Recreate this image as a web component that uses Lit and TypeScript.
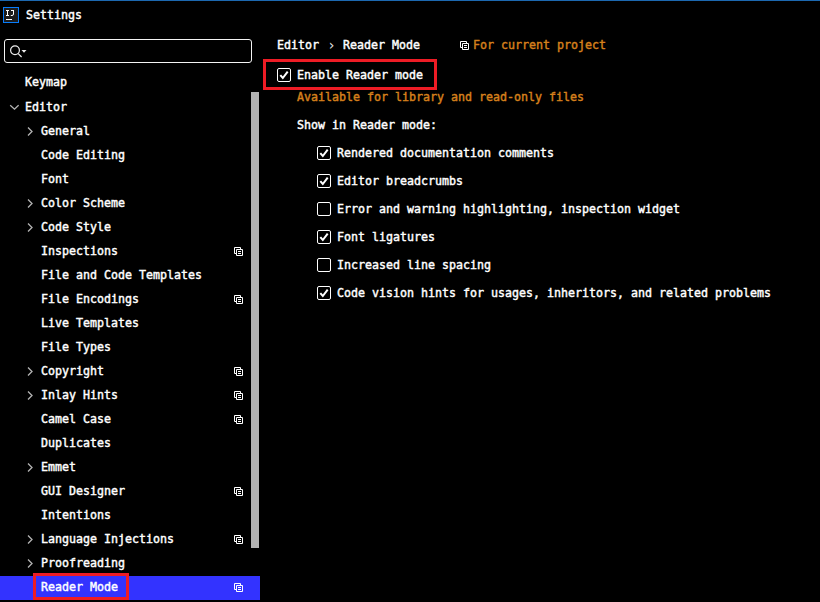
import { LitElement, html, css, svg, nothing } from "lit";
import { customElement } from "lit/decorators.js";
import { classMap } from "lit/directives/class-map.js";

interface Item { label: string; arrow?: "open" | "closed"; top?: boolean; first?: boolean; project?: boolean; selected?: boolean; }

const items: Item[] = [
  { label: "Keymap", top: true, first: true },
  { label: "Editor", top: true, arrow: "open" },
  { label: "General", arrow: "closed" },
  { label: "Code Editing" },
  { label: "Font" },
  { label: "Color Scheme", arrow: "closed" },
  { label: "Code Style", arrow: "closed" },
  { label: "Inspections", project: true },
  { label: "File and Code Templates" },
  { label: "File Encodings", project: true },
  { label: "Live Templates" },
  { label: "File Types" },
  { label: "Copyright", arrow: "closed", project: true },
  { label: "Inlay Hints", arrow: "closed", project: true },
  { label: "Camel Case", project: true },
  { label: "Duplicates" },
  { label: "Emmet", arrow: "closed" },
  { label: "GUI Designer", project: true },
  { label: "Intentions" },
  { label: "Language Injections", arrow: "closed", project: true },
  { label: "Proofreading", arrow: "closed" },
  { label: "Reader Mode", project: true, selected: true },
];

const options: [string, boolean][] = [
  ["Rendered documentation comments", true],
  ["Editor breadcrumbs", true],
  ["Error and warning highlighting, inspection widget", false],
  ["Font ligatures", true],
  ["Increased line spacing", false],
  ["Code vision hints for usages, inheritors, and related problems", true],
];

const copyIcon = html`<svg class="copy" width="9" height="9" viewBox="0 0 9 9" fill="none" stroke="#fff">
  <path d="M2 6.5H.5V.5H6.5V2M2.5 2.5H8.5V8.5H2.5ZM4 4.5H7M4 6.5H7"/></svg>`;

const arrowIcon = (kind: "open" | "closed") => html`<svg class="arrow ${kind}" width="10" height="10" viewBox="0 0 10 10"
  fill="none" stroke="#b4b4b4" stroke-width="1.3">
  ${kind === "open" ? svg`<path d="M1.2 3.2L5.5 7.2L9.6 3.2"/>` : svg`<path d="M3 .5L7 4.5L3 8.5"/>`}</svg>`;

const checkbox = (on: boolean) => html`<svg class="check" width="14" height="14" viewBox="0 0 14 14" fill="none" stroke="#fff">
  <rect x=".5" y=".5" width="13" height="13" rx="1.5"/>
  ${on ? svg`<path d="M3.3 7.2L5.8 10L10.7 3.6" stroke-width="2"/>` : nothing}</svg>`;

@customElement("app-root")
export class AppRoot extends LitElement {
  static styles = css`
    :host {
      display: flex; flex-direction: column; box-sizing: border-box;
      width: 820px; height: 602px; overflow: hidden;
      background: #000; color: #fff; border-top: 1px solid #1c68b0;
      font: 11.635px/16px "DejaVu Sans Mono", "Liberation Mono", monospace;
      -webkit-text-stroke: 0.42px currentColor;
      white-space: nowrap;
    }
    svg { display: block; flex: none; }
    .title { display: flex; height: 38px; padding: 6px 0 0 3px; box-sizing: border-box; }
    .title span { margin-left: 7px; }
    .body { display: flex; flex: 1; }
    .side { width: 260px; position: relative; }
    .search {
      box-sizing: border-box; width: 248px; height: 24px; margin: 0 0 9px 4px;
      border: 1px solid #f4f4f4; border-radius: 3px; padding: 5px 0 0 5px;
    }
    .row { display: flex; height: 24px; box-sizing: border-box; padding: 3px 17px 0 25px; position: relative; }
    .row.top { padding-left: 9px; }
    .row.first { padding-top: 2px; }
    .row.selected { background: #3333ff; }
    .slot { width: 16px; flex: none; }
    .arrow { margin-top: 4px; }
    .arrow.open { margin-top: 3px; }
    .name { flex: 1; }
    .copy { margin-top: 4px; }
    .scroll { position: absolute; right: 1px; top: 53px; width: 8px; height: 456px; background: #b3b3b3; }
    .mark { position: absolute; box-sizing: border-box; border: 3px solid #ee1c25; }
    .row .mark { left: 33px; top: -3px; width: 96px; height: 27px; }
    .main { flex: 1; padding-left: 17px; margin-top: -2px; }
    .crumbs { display: flex; height: 30px; }
    .crumbs .sep { width: 24px; padding-left: 1px; box-sizing: border-box; text-align: center; color: #e4e4e4; font-size: 14px; -webkit-text-stroke: 0; }
    .crumbs .copy { margin: 4px 4px 0 40px; }
    .orange { color: #d6801c; }
    .enable { display: flex; position: relative; height: 22px; }
    .enable .mark { left: -14px; top: -8px; width: 174px; height: 31px; }
    .check { margin: 1px 6px 0 0; }
    .note { margin-left: 20px; height: 28px; }
    .opt { display: flex; margin-left: 40px; height: 28px; }
  `;

  render() {
    return html`
      <div class="title">
        <svg width="16" height="16" viewBox="0 0 16 16">
          <rect x=".5" y=".5" width="15" height="15" fill="#1c1c1c" stroke="#087cfa"/>
          <path d="M3 3.5H6M4.5 3.5V8.5M3 8.5H6M8 3.5H11M10.5 3.5V7Q10.5 8.5 9 8.5H7.8M3 12.5H9" fill="none" stroke="#fff"/>
        </svg><span>Settings</span>
      </div>
      <div class="body">
        <div class="side">
          <div class="search">
            <svg width="17" height="14" viewBox="0 0 17 14" fill="none" stroke="#eee" stroke-width="1.2">
              <circle cx="5" cy="5.3" r="4.4"/><path d="M8.2 8.6L11.6 12"/><path d="M11.5 5H16.5L14 7.7Z" fill="#eee" stroke="none"/>
            </svg>
          </div>
          ${items.map((i) => html`<div class=${classMap({ row: true, top: !!i.top, first: !!i.first, selected: !!i.selected })}>
            <span class="slot">${i.arrow ? arrowIcon(i.arrow) : nothing}</span><span class="name">${i.label}</span>${i.project ? copyIcon : nothing}${i.selected ? html`<div class="mark"></div>` : nothing}
          </div>`)}
          <div class="scroll"></div>
        </div>
        <div class="main">
          <div class="crumbs"><span>Editor</span><span class="sep">›</span><span>Reader Mode</span>${copyIcon}<span class="orange">For current project</span></div>
          <div class="enable">${checkbox(true)}<span>Enable Reader mode</span><div class="mark"></div></div>
          <div class="note orange">Available for library and read-only files</div>
          <div class="note">Show in Reader mode:</div>
          ${options.map(([label, on]) => html`<div class="opt">${checkbox(on)}<span>${label}</span></div>`)}
        </div>
      </div>`;
  }
}
